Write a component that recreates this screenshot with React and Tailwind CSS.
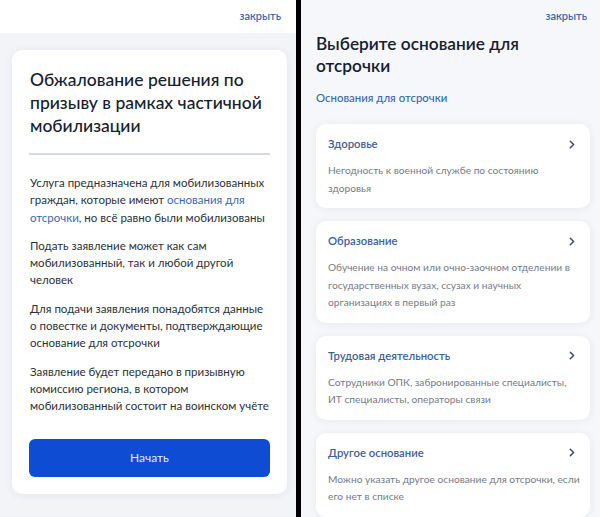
import React from 'react';

const reasons = [
  { title: 'Здоровье', text: 'Негодность к военной службе по состоянию здоровья' },
  { title: 'Образование', text: 'Обучение на очном или очно-заочном отделении в государственных вузах, ссузах и научных организациях в первый раз' },
  { title: 'Трудовая деятельность', text: 'Сотрудники ОПК, забронированные специалисты, ИТ\u00a0специалисты, операторы связи' },
  { title: 'Другое основание', text: 'Можно указать другое основание для отсрочки, если его нет в списке' },
];

function Chevron() {
  return (
    <svg width="6" height="9" viewBox="0 0 6 9" fill="none">
      <path d="M1.3 1.2 L4.6 4.5 L1.3 7.8" stroke="#3b4a60" strokeWidth="1.5" strokeLinecap="round" strokeLinejoin="round" />
    </svg>
  );
}

// left screen: service description
function IntroScreen() {
  return (
    <div className="w-[296px] h-full flex flex-col bg-[#f2f4f8]">
      <div className="h-[33px] shrink-0 bg-white flex items-center justify-end pr-[15px]">
        <span className="text-[11px] font-semibold text-[#3c67ad]">закрыть</span>
      </div>
      <div className="flex-1 flex pt-[17px] pl-[12px]">
        <div className="w-[275px] h-[444px] bg-white rounded-[10px] shadow-[0_1px_8px_rgba(20,40,80,0.07)] px-[17px] pt-[18px]">
          <h1 className="pl-[1px] text-[17.5px] leading-[23px] font-medium text-[#14202e]">
            Обжалование решения по призыву в рамках частичной мобилизации
          </h1>
          <div className="h-[2px] bg-[#d7dade] mt-[16px] mb-[19px]" />
          <div className="pl-[1px] flex flex-col gap-[11px] text-[11.5px] leading-[17.3px] text-[#2b3038]">
            <p>
              Услуга предназначена для мобилизованных граждан, которые имеют{' '}
              <span className="text-[#3a67b0]">основания для отсрочки</span>, но всё равно были мобилизованы
            </p>
            <p>Подать заявление может как сам мобилизованный, так и любой другой человек</p>
            <p>Для подачи заявления понадобятся данные о повестке и документы, подтверждающие основание для отсрочки</p>
            <p>Заявление будет передано в призывную комиссию региона, в котором мобилизованный состоит на воинском учёте</p>
          </div>
          <button className="mt-[24px] w-full h-[38px] rounded-[6px] bg-[#0d4cd3] text-[12px] text-[#e4ecff] flex items-center justify-center">
            Начать
          </button>
        </div>
      </div>
    </div>
  );
}

// right screen: list of reasons
function ReasonsScreen() {
  return (
    <div className="flex-1 h-full flex flex-col bg-[#f6f7fa] pl-[15px] pr-[10px]">
      <div className="h-[33px] shrink-0 flex items-center justify-end pr-[3px]">
        <span className="text-[11px] font-semibold text-[#3c67ad]">закрыть</span>
      </div>
      <h2 className="max-w-[240px] text-[17.3px] leading-[22px] font-semibold text-[#14202e]">Выберите основание для отсрочки</h2>
      <div className="mt-[13px] text-[11.4px] leading-[16px] font-medium text-[#3b66a8]">Основания для отсрочки</div>
      <div className="mt-[18px] flex flex-col gap-[13px]">
        {reasons.map((r) => (
          <div key={r.title} className="bg-white rounded-[10px] shadow-[0_1px_8px_rgba(20,40,80,0.07)] pl-[12px] pr-[15px] pt-[12px] pb-[11px]">
            <div className="flex items-center justify-between">
              <span className="text-[11.3px] leading-[16px] font-semibold text-[#3d5f9a]">{r.title}</span>
              <Chevron />
            </div>
            <p className="mt-[10px] text-[10.2px] leading-[17.5px] text-[#737b87] mr-[-8px]">{r.text}</p>
          </div>
        ))}
      </div>
    </div>
  );
}

export default function App() {
  return (
    <div className="w-[600px] h-[517px] flex overflow-hidden font-['Lato',sans-serif]">
      <IntroScreen />
      <div className="w-[5px] h-full bg-black shrink-0" />
      <ReasonsScreen />
    </div>
  );
}
